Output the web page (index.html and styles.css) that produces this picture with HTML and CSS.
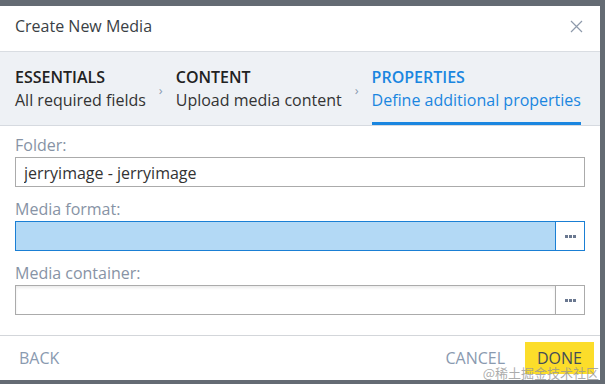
FILE: index.html
```html
<!DOCTYPE html>
<html lang="en">
<head>
    <meta charset="UTF-8">
    <title>Create New Media</title>
    <link rel="stylesheet" href="styles.css">
</head>
<body>

<div class="dialog">
    <!-- Header -->
    <div class="dialog-header">
        <span class="dialog-title">Create New Media</span>
        <svg class="close-icon" width="13" height="13" viewBox="0 0 13 13">
            <path d="M1 1 L12 12 M12 1 L1 12" stroke="#8e9aab" stroke-width="1.2" fill="none"/>
        </svg>
    </div>

    <!-- Wizard steps -->
    <div class="steps">
        <div class="step">
            <div class="step-name">ESSENTIALS</div>
            <div class="step-desc">All required fields</div>
        </div>
        <span class="chevron">&#8250;</span>
        <div class="step">
            <div class="step-name">CONTENT</div>
            <div class="step-desc">Upload media content</div>
        </div>
        <span class="chevron">&#8250;</span>
        <div class="step active">
            <div class="step-name">PROPERTIES</div>
            <div class="step-desc">Define additional properties</div>
        </div>
    </div>

    <!-- Fields -->
    <div class="dialog-body">
        <label class="field-label">Folder:</label>
        <div class="field">
            <input class="field-input" type="text" value="jerryimage - jerryimage">
        </div>

        <label class="field-label">Media format:</label>
        <div class="field focused">
            <input class="field-input" type="text">
            <button class="more-btn"><span></span><span></span><span></span></button>
        </div>

        <label class="field-label">Media container:</label>
        <div class="field">
            <input class="field-input inset" type="text">
            <button class="more-btn"><span></span><span></span><span></span></button>
        </div>
    </div>

    <!-- Footer -->
    <div class="dialog-footer">
        <button class="link-btn">BACK</button>
        <div class="footer-right">
            <button class="link-btn">CANCEL</button>
            <button class="done-btn">DONE</button>
        </div>
    </div>

    <span class="watermark">@稀土掘金技术社区</span>
</div>

</body>
</html>
```

FILE: styles.css
```css
/* Basic Reset */
* {
    margin: 0;
    padding: 0;
    box-sizing: border-box;
}
body {
    font-family: "Open Sans", Arial, sans-serif;
    background-color: #646b73;
    color: #333;
    height: 384px;
    overflow: hidden;
}
.dialog {
    position: relative;
    margin-top: 6px;
    width: 600px;
    height: 374px;
    background-color: #fff;
    display: flex;
    flex-direction: column;
}

/* Header */
.dialog-header {
    height: 46px;
    padding: 0 17px 5px 15px;
    display: flex;
    align-items: center;
    justify-content: space-between;
    border-bottom: 1px solid #d9dde2;
}
.dialog-title {
    font-size: 16px;
    color: #3a3f45;
}

/* Steps */
.steps {
    height: 74px;
    background-color: #eef1f5;
    border-bottom: 1px solid #d6dae0;
    padding: 0 0 0 15px;
    display: flex;
    align-items: stretch;
}
.step {
    padding-top: 14px;
    line-height: 23px;
}
.step-name {
    font-size: 16px;
    font-weight: 600;
    color: #222;
}
.step-desc {
    font-size: 16px;
    color: #333;
}
.step.active {
    border-bottom: 3px solid #1a86e0;
}
.step.active .step-name,
.step.active .step-desc {
    color: #1a86e0;
}
.chevron {
    font-size: 13px;
    color: #8c9bb0;
    padding: 29px 13px 0 13px;
}

/* Body */
.dialog-body {
    flex: 1;
    padding: 9px 15px 0 15px;
}
.field-label {
    display: block;
    font-size: 16px;
    color: #8793a5;
    line-height: 21px;
    margin-bottom: 1px;
}
.field {
    display: flex;
    height: 30px;
    border: 1px solid #ababab;
    margin-bottom: 12px;
    width: 570px;
}
.field-input {
    flex: 1;
    border: none;
    outline: none;
    font-family: "Open Sans", Arial, sans-serif;
    font-size: 16px;
    color: #333;
    padding: 2px 8px 0 8px;
    background: #fff;
}
.field-input.inset {
    box-shadow: inset 0 2px 3px rgba(0, 0, 0, 0.08);
}
.field.focused {
    border-color: #1a7fd4;
}
.field.focused .field-input {
    background-color: #b3d9f5;
}
.more-btn {
    width: 29px;
    border: none;
    border-left: 1px solid #ababab;
    background: #fff;
    display: flex;
    align-items: center;
    justify-content: center;
    gap: 1px;
}
.field.focused .more-btn {
    border-left-color: #1a7fd4;
}
.more-btn span {
    width: 3px;
    height: 3px;
    background-color: #6a7890;
}

/* Footer */
.dialog-footer {
    height: 45px;
    border-top: 1px solid #d3d6da;
    display: flex;
    align-items: center;
    justify-content: space-between;
    padding: 0 6px 0 19px;
}
.footer-right {
    display: flex;
    align-items: center;
    gap: 20px;
}
.link-btn {
    border: none;
    background: none;
    font-family: "Open Sans", Arial, sans-serif;
    font-size: 16px;
    color: #8a9ab0;
    margin-top: -1px;
}
.done-btn {
    border: none;
    background-color: #fcdd2a;
    color: #444c57;
    font-family: "Open Sans", Arial, sans-serif;
    font-size: 16px;
    width: 69px;
    height: 32px;
    margin-top: -1px;
}
.watermark {
    position: absolute;
    right: 1px;
    bottom: 0;
    font-family: "Noto Sans CJK SC", sans-serif;
    font-size: 13px;
    line-height: 14px;
    color: rgba(150, 150, 150, 0.8);
}
```
